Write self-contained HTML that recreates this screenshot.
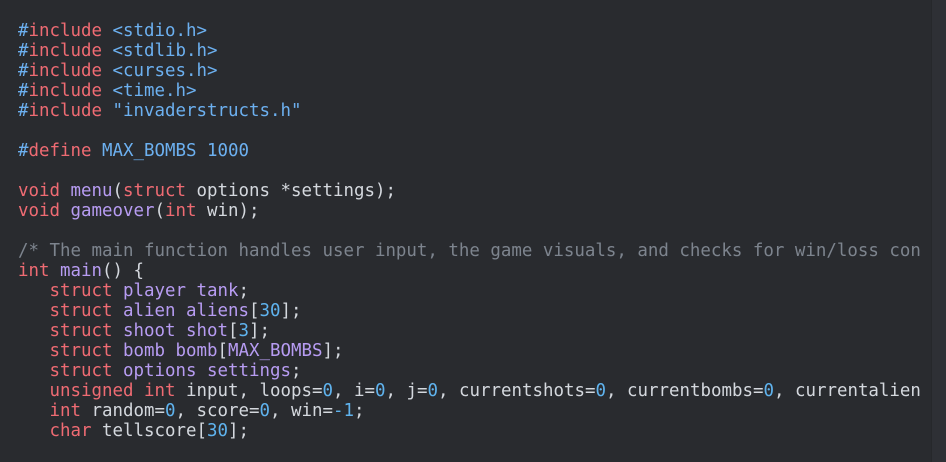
<!DOCTYPE html>
<html><head><meta charset="utf-8"><style>
html,body{margin:0;padding:0;}
body{width:946px;height:462px;background:#292b2f;position:relative;overflow:hidden;}
.strip{position:absolute;left:931px;top:0;width:15px;height:462px;background:#2e3035;border-left:1px solid #26282b;}
pre{margin:0;position:absolute;left:18px;top:21px;font-family:"DejaVu Sans Mono","Liberation Mono",monospace;font-size:17.45px;line-height:20px;color:#d4d8de;white-space:pre;}
.k{color:#ef6b73}.b{color:#6cb0f0}.p{color:#b79cf2}.c{color:#7d848e}.n{color:#5fb3ee}
</style></head><body>
<div class="strip"></div>
<pre><span class="b">#</span><span class="k">include</span> <span class="b">&lt;stdio.h&gt;</span>
<span class="b">#</span><span class="k">include</span> <span class="b">&lt;stdlib.h&gt;</span>
<span class="b">#</span><span class="k">include</span> <span class="b">&lt;curses.h&gt;</span>
<span class="b">#</span><span class="k">include</span> <span class="b">&lt;time.h&gt;</span>
<span class="b">#</span><span class="k">include</span> <span class="b">"invaderstructs.h"</span>

<span class="b">#</span><span class="k">define</span> <span class="b">MAX_BOMBS 1000</span>

<span class="k">void</span> <span class="p">menu</span>(<span class="k">struct</span> options *settings);
<span class="k">void</span> <span class="p">gameover</span>(<span class="k">int</span> win);

<span class="c">/* The main function handles user input, the game visuals, and checks for win/loss con</span>
<span class="k">int</span> <span class="p">main</span>() {
   <span class="k">struct</span> <span class="p">player tank</span>;
   <span class="k">struct</span> <span class="p">alien aliens</span>[<span class="n">30</span>];
   <span class="k">struct</span> <span class="p">shoot shot</span>[<span class="n">3</span>];
   <span class="k">struct</span> <span class="p">bomb bomb</span>[<span class="p">MAX_BOMBS</span>];
   <span class="k">struct</span> <span class="p">options settings</span>;
   <span class="k">unsigned</span> <span class="k">int</span> input, loops=<span class="n">0</span>, i=<span class="n">0</span>, j=<span class="n">0</span>, currentshots=<span class="n">0</span>, currentbombs=<span class="n">0</span>, currentalien
   <span class="k">int</span> random=<span class="n">0</span>, score=<span class="n">0</span>, win=<span class="n">-1</span>;
   <span class="k">char</span> tellscore[<span class="n">30</span>];</pre>
</body></html>
